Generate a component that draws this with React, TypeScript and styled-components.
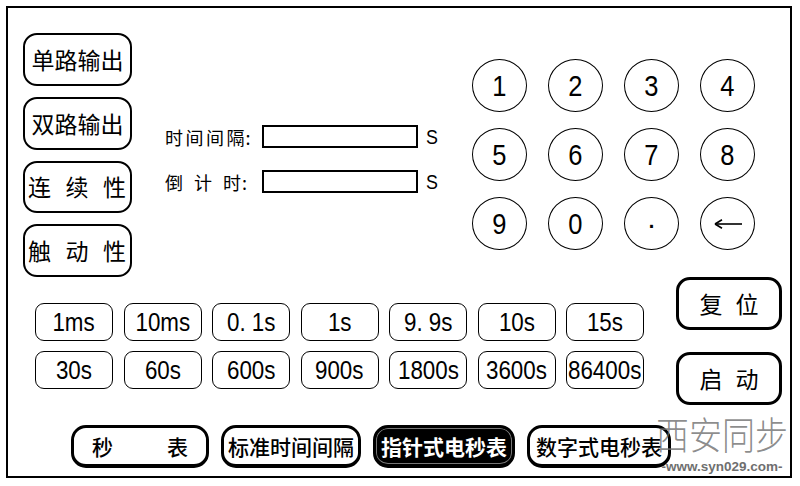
import React from "react";
import styled, { createGlobalStyle } from "styled-components";

const Global = createGlobalStyle`
  html, body { margin: 0; padding: 0; background: #fff; }
  body { width: 800px; height: 486px; overflow: hidden; font-family: "Noto Sans CJK SC", "Noto Sans", sans-serif; color: #000; }
  * { box-sizing: border-box; }
`;

const CJK = `"Noto Sans CJK SC", "Noto Sans", sans-serif`;
const LATIN = `"Liberation Sans", Arial, sans-serif`;

const Frame = styled.div`
  position: relative;
  margin: 6px;
  width: 786px;
  height: 472px;
  border: 2px solid #000;
  display: flex;
  flex-direction: column;
`;

const Top = styled.div`
  display: flex;
  height: 269px;
`;

const LeftCol = styled.div`
  display: flex;
  flex-direction: column;
  gap: 11px;
  margin: 25px 0 0 15px;
`;

const ModeButton = styled.div<{ $spaced?: boolean }>`
  width: 109px;
  height: 53px;
  border: 2.5px solid #000;
  border-radius: 14px;
  display: flex;
  align-items: center;
  justify-content: ${(p) => (p.$spaced ? "space-between" : "center")};
  padding: ${(p) => (p.$spaced ? "0 4px 0 3px" : "0")};
  font-family: ${CJK};
  font-size: 23px;
  line-height: 1;
  white-space: nowrap;
`;

const Fields = styled.div`
  display: flex;
  flex-direction: column;
  gap: 22px;
  margin: 117px 0 0 33px;
`;

const FieldRow = styled.div`
  display: flex;
  align-items: center;
  height: 23px;
`;

const FieldLabel = styled.span`
  width: 97px;
  display: flex;
  align-items: center;
  font-family: ${CJK};
  font-size: 18px;
  line-height: 1;
  white-space: nowrap;
`;

const LabelChars = styled.span<{ $gap: number }>`
  display: flex;
  gap: ${(p) => p.$gap}px;
`;

const Colon = styled.span`
  margin-left: 1px;
`;

const InputBox = styled.div`
  width: 156px;
  height: 23px;
  border: 2px solid #000;
`;

const Unit = styled.span`
  margin-left: 7px;
  font-family: ${LATIN};
  font-size: 21px;
  line-height: 1;
  display: inline-block;
  transform: scaleX(0.85);
`;

const Keypad = styled.div`
  display: grid;
  grid-template-columns: repeat(4, 55px);
  grid-auto-rows: 53px;
  column-gap: 21px;
  row-gap: 16px;
  margin: 51px 35px 0 auto;
`;

const Key = styled.div`
  border: 1.8px solid #000;
  border-radius: 50%;
  display: flex;
  align-items: center;
  justify-content: center;
  font-family: ${LATIN};
  font-size: 30px;
  line-height: 1;
`;

const Narrow = styled.span<{ $sx: number }>`
  display: inline-block;
  transform: scaleX(${(p) => p.$sx});
`;

const Middle = styled.div`
  display: flex;
  height: 136px;
`;

const TimeGrid = styled.div`
  display: grid;
  grid-template-columns: repeat(7, 78px);
  grid-auto-rows: 38px;
  column-gap: 10.5px;
  row-gap: 10px;
  margin: 26px 0 0 27px;
  align-content: start;
`;

const TimeButton = styled.div`
  border: 1.3px solid #000;
  border-radius: 9px;
  display: flex;
  align-items: center;
  justify-content: center;
  font-family: ${LATIN};
  font-size: 26px;
  line-height: 1;
  white-space: nowrap;
`;

const RightCol = styled.div`
  display: flex;
  flex-direction: column;
  gap: 22px;
  margin: 0 8px 0 auto;
`;

const ActionButton = styled.div`
  width: 106px;
  height: 53px;
  border: 3px solid #000;
  border-radius: 14px;
  display: flex;
  align-items: center;
  justify-content: center;
  gap: 13px;
  font-family: ${CJK};
  font-size: 23px;
  line-height: 1;
`;

const Tabs = styled.div`
  display: flex;
  gap: 12px;
  margin: 12px 0 0 63px;
`;

const Tab = styled.div<{ $active?: boolean; $w: number }>`
  width: ${(p) => p.$w}px;
  height: 43px;
  border: 3px solid #000;
  border-bottom-width: 4px;
  border-radius: 15px;
  display: flex;
  align-items: center;
  justify-content: center;
  font-family: ${CJK};
  font-size: 21px;
  line-height: 1;
  white-space: nowrap;
  background: ${(p) => (p.$active ? "#000" : "#fff")};
  color: ${(p) => (p.$active ? "#fff" : "#000")};
  font-weight: ${(p) => (p.$active ? 700 : 500)};
  box-shadow: ${(p) => (p.$active ? "inset 0 0 0 1px #777" : "none")};
`;

const WideSpace = styled.span`
  display: inline-block;
  width: 54px;
`;

const Watermark = styled.div`
  position: absolute;
  right: 0;
  bottom: 3px;
  width: 136px;
  display: flex;
  flex-direction: column;
  align-items: center;
  white-space: nowrap;
  pointer-events: none;
`;

const WatermarkTitle = styled.span`
  font-family: ${CJK};
  font-weight: 300;
  font-size: 33px;
  line-height: 1;
  letter-spacing: 0;
  display: inline-block;
  transform: scaleY(1.15);
  color: rgba(110, 110, 110, 0.8);
`;

const WatermarkUrl = styled.span`
  font-family: ${LATIN};
  font-weight: 700;
  font-size: 13.5px;
  line-height: 1;
  margin-top: 10px;
  color: #6f6f6f;
`;

const Arrow = () => (
  <svg width="30" height="12" viewBox="0 0 30 12">
    <line x1="2" y1="6" x2="29" y2="6" stroke="#000" strokeWidth="1.6" />
    <path d="M2 6 L9 1.8 M2 6 L9 10.2" stroke="#000" strokeWidth="1.6" fill="none" />
  </svg>
);

const keys: React.ReactNode[] = ["1", "2", "3", "4", "5", "6", "7", "8", "9", "0"];
const times = [
  "1ms", "10ms", "0. 1s", "1s", "9. 9s", "10s", "15s",
  "30s", "60s", "600s", "900s", "1800s", "3600s", "86400s",
];

const Spread = ({ text }: { text: string }) => (
  <>
    {text.split("").map((c, i) => (
      <span key={i}>{c}</span>
    ))}
  </>
);

export default function App() {
  return (
    <>
      <Global />
      <Frame>
        <Top>
          <LeftCol>
            <ModeButton>单路输出</ModeButton>
            <ModeButton>双路输出</ModeButton>
            <ModeButton $spaced><Spread text="连续性" /></ModeButton>
            <ModeButton $spaced><Spread text="触动性" /></ModeButton>
          </LeftCol>
          <Fields>
            <FieldRow>
              <FieldLabel>
                <LabelChars $gap={2.5}><Spread text="时间间隔" /></LabelChars>
                <Colon>:</Colon>
              </FieldLabel>
              <InputBox />
              <Unit>S</Unit>
            </FieldRow>
            <FieldRow>
              <FieldLabel>
                <LabelChars $gap={11}><Spread text="倒计时" /></LabelChars>
                <Colon>:</Colon>
              </FieldLabel>
              <InputBox />
              <Unit>S</Unit>
            </FieldRow>
          </Fields>
          <Keypad>
            {keys.map((k, i) => (
              <Key key={i}><Narrow $sx={0.85}>{k}</Narrow></Key>
            ))}
            <Key>·</Key>
            <Key><Arrow /></Key>
          </Keypad>
        </Top>
        <Middle>
          <TimeGrid>
            {times.map((t) => (
              <TimeButton key={t}><Narrow $sx={0.86}>{t}</Narrow></TimeButton>
            ))}
          </TimeGrid>
          <RightCol>
            <ActionButton><Spread text="复位" /></ActionButton>
            <ActionButton><Spread text="启动" /></ActionButton>
          </RightCol>
        </Middle>
        <Tabs>
          <Tab $w={138}>秒<WideSpace />表</Tab>
          <Tab $w={140}>标准时间间隔</Tab>
          <Tab $w={142} $active>指针式电秒表</Tab>
          <Tab $w={144}>数字式电秒表</Tab>
        </Tabs>
        <Watermark>
          <WatermarkTitle>西安同步</WatermarkTitle>
          <WatermarkUrl>-www.syn029.com-</WatermarkUrl>
        </Watermark>
      </Frame>
    </>
  );
}
